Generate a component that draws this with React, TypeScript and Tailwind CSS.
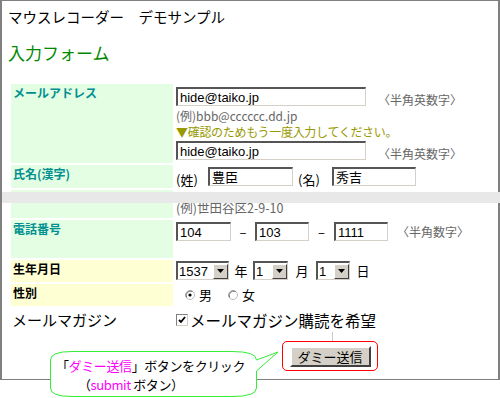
import React from 'react';

const inset = 'border-t-2 border-l-2 border-r border-b border-t-[#555] border-l-[#555] border-r-[#d4d0c8] border-b-[#d4d0c8] bg-white';

function TextBox({ value, width }: { value: string; width: string }) {
    return (
        <div className={`${inset} ${width} h-[19px] shrink-0 flex items-center pl-[2px] text-[13px] leading-none text-black font-['Liberation_Sans','Noto_Sans_CJK_JP',sans-serif]`}>
            {value}
        </div>
    );
}

function Select({ value, width }: { value: string; width: string }) {
    return (
        <div className={`${inset} ${width} h-[19px] shrink-0 flex items-center justify-between`}>
            <span className="pl-[1px] text-[13px] leading-none font-['Liberation_Sans',sans-serif]">{value}</span>
            <span className="w-[15px] h-[15px] bg-[#d4d0c8] border border-t-white border-l-white border-r-[#404040] border-b-[#404040] flex items-center justify-center">
                <svg width="7" height="4" viewBox="0 0 7 4"><path d="M0 0H7L3.5 4Z" fill="#000" /></svg>
            </span>
        </div>
    );
}

function Radio({ checked }: { checked?: boolean }) {
    return (
        <svg width="10" height="10" viewBox="0 0 10 10" className="shrink-0">
            <circle cx="5" cy="5" r="4.5" fill="#fff" stroke="#bbb" />
            <path d="M1.5 7.5A4.5 4.5 0 0 1 7.5 1.5" fill="none" stroke="#666" />
            {checked && <circle cx="5" cy="5" r="1.6" fill="#000" />}
        </svg>
    );
}

function Label({ text, tone }: { text: string; tone: 'green' | 'yellow' }) {
    return (
        <div className={`${tone === 'green' ? 'bg-[#e4fee4] text-[#009090]' : 'bg-[#ffffd4] text-black'} px-[2px] pt-[2px] text-[12px] leading-[14px] font-bold`}>
            {text}
        </div>
    );
}

export default function App() {
    return (
        <div className="relative w-[500px] h-[398px] bg-white overflow-hidden font-['Noto_Sans_CJK_JP',sans-serif] text-black leading-none">
            <div className="w-[500px] h-[380px] border-l-2 border-t border-r-2 border-b border-[#808080] pl-[9px]">
                <div className="mt-[6px] -ml-[3px] text-[14.5px] leading-[20px]">マウスレコーダー　デモサンプル</div>
                <div className="mt-[15px] -ml-[3px] text-[17px] leading-[22px] text-[#008800]">入力フォーム</div>

                <div className="mt-[20px] grid grid-cols-[162px_1fr] gap-x-[3px] gap-y-[2px] w-[480px]">
                    {/* メールアドレス */}
                    <Label text="メールアドレス" tone="green" />
                    <div className="h-[79px] pt-[3px]">
                        <div className="h-[19px] flex items-center">
                            <TextBox value="hide@taiko.jp" width="w-[190px]" />
                            <span className="ml-[12px] mt-[6px] text-[12px] leading-[14px] text-[#666]">〈半角英数字〉</span>
                        </div>
                        <div className="mt-[2px] text-[12px] leading-[16px] text-[#666]">(例)bbb@cccccc.dd.jp</div>
                        <div className="text-[12px] leading-[16px] text-[#999900] tracking-[-0.3px]">▼確認のためもう一度入力してください。</div>
                        <div className="mt-[1px] h-[19px] flex items-center">
                            <TextBox value="hide@taiko.jp" width="w-[190px]" />
                            <span className="ml-[12px] mt-[6px] text-[12px] leading-[14px] text-[#666]">〈半角英数字〉</span>
                        </div>
                    </div>

                    {/* 氏名 */}
                    <Label text="氏名(漢字)" tone="green" />
                    <div className="h-[23px] pt-[2px] flex items-start text-[13px] leading-[19px]">
                        <span className="w-[32px] pt-[3px]">(姓)</span>
                        <TextBox value="豊臣" width="w-[85px]" />
                        <span className="ml-[5px] w-[34px] pt-[3px]">(名)</span>
                        <TextBox value="秀吉" width="w-[84px]" />
                    </div>

                    {/* 住所 */}
                    <div className="h-[28px] bg-[#e4fee4]" />
                    <div className="h-[28px] flex items-end pb-[3px] text-[12.5px] leading-[14px] text-[#666]">(例)世田谷区2-9-10</div>

                    {/* 電話番号 */}
                    <Label text="電話番号" tone="green" />
                    <div className="h-[38px] pt-[2px] flex items-start text-[13px] leading-[19px]">
                        <TextBox value="104" width="w-[55px]" />
                        <span className="w-[24px] text-center">–</span>
                        <TextBox value="103" width="w-[54px]" />
                        <span className="w-[25px] text-center">–</span>
                        <TextBox value="1111" width="w-[54px]" />
                        <span className="ml-[9px] mt-[3px] text-[12px] leading-[14px] text-[#666]">〈半角数字〉</span>
                    </div>

                    {/* 生年月日 */}
                    <Label text="生年月日" tone="yellow" />
                    <div className="h-[22px] pt-[1px] flex items-start text-[13px] leading-[19px]">
                        <Select value="1537" width="w-[53px]" />
                        <span className="w-[24px] text-center">年</span>
                        <Select value="1" width="w-[35px]" />
                        <span className="w-[28px] text-center">月</span>
                        <Select value="1" width="w-[34px]" />
                        <span className="w-[26px] text-center">日</span>
                    </div>

                    {/* 性別 */}
                    <Label text="性別" tone="yellow" />
                    <div className="h-[22px] flex items-center pl-[9px] text-[13px] leading-[16px]">
                        <Radio checked />
                        <span className="ml-[4px] mr-[16px]">男</span>
                        <Radio />
                        <span className="ml-[4px]">女</span>
                    </div>

                    {/* メールマガジン */}
                    <div className="h-[24px] flex items-center text-[15px] leading-[18px] pl-[1px]">メールマガジン</div>
                    <div className="h-[24px] flex items-center text-[15.5px] leading-[18px]">
                        <span className="w-[12px] h-[12px] border border-t-[#808080] border-l-[#808080] border-r-[#d4d0c8] border-b-[#d4d0c8] bg-white flex items-center justify-center">
                            <svg width="8" height="8" viewBox="0 0 8 8"><path d="M1 4L3 6L7 1" fill="none" stroke="#000" strokeWidth="1.8" /></svg>
                        </span>
                        <span className="ml-[2px]">メールマガジン購読を希望</span>
                    </div>
                </div>

                <div className="ml-[321px] w-px h-[9px] bg-[#c8c8c8]" />
                <div className="ml-[271px] w-[96px] h-[30px] border border-[#ff0000] rounded-[5px] flex items-center justify-center">
                    <button className="w-[81px] h-[21px] bg-[#d4d0c8] border-2 border-t-white border-l-white border-r-[#404040] border-b-[#404040] text-[13px] leading-none">
                        ダミー送信
                    </button>
                </div>
            </div>

            {/* 更新時の描画ずれ */}
            <div className="absolute left-[2px] top-[192px] w-[498px] h-[11px] bg-[#e8e8e8]" />

            {/* 吹き出し */}
            <svg className="absolute left-0 top-0" width="500" height="398">
                <path
                    d="M72 351.5H232Q256.5 351.5 256.5 360L278 352L256.5 371V388Q256.5 396.5 232 396.5H72Q50.5 396.5 50.5 388V360Q50.5 351.5 72 351.5Z"
                    fill="#fff"
                    stroke="#33ee33"
                />
            </svg>
            <div className="absolute left-[56px] top-[356px] text-[13px] leading-[19px] tracking-[-0.4px]">
                <div>「<span className="text-[#ff00ff]">ダミー送信</span>」ボタンをクリック</div>
                <div className="pl-[22px]">（<span className="text-[#ff00ff]">submit</span> ボタン）</div>
            </div>
        </div>
    );
}
